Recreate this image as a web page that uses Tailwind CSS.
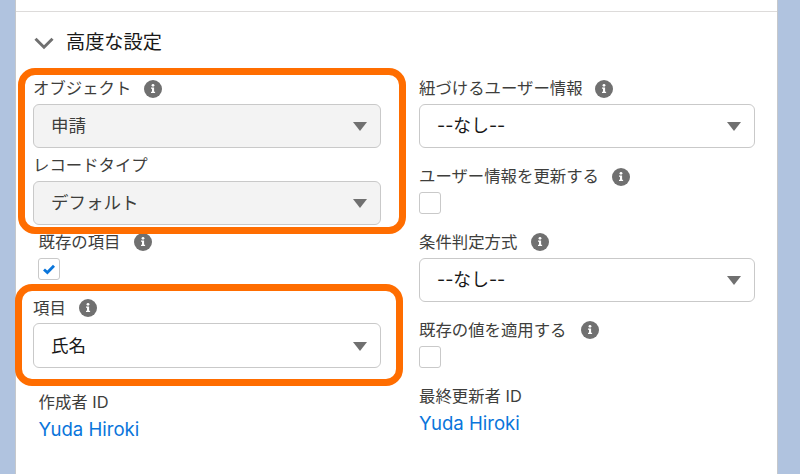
<!DOCTYPE html>
<html lang="ja">
<head>
<meta charset="utf-8">
<title>高度な設定</title>
<script src="https://cdn.jsdelivr.net/npm/@tailwindcss/browser@4"></script>
</head>
<body class="h-[474px] w-[800px] overflow-hidden bg-[#b0c3df] font-['Inter','Noto_Sans_CJK_JP',sans-serif]">
<svg class="hidden">
  <symbol id="info" viewBox="0 0 18 18"><circle cx="9" cy="9" r="9" fill="#707070"/><circle cx="9" cy="5.3" r="1.4" fill="#fff"/><path d="M7 7.5H10.1V11.7h1v1.3H7v-1.3h1V8.8H7z" fill="#fff"/></symbol>
  <symbol id="caret" viewBox="0 0 14 9"><path d="M0 0H14L7 9Z" fill="#707070"/></symbol>
</svg>
<div class="relative ml-[15px] h-full w-[763px] border-x border-[#c6c8cb] bg-white">
  <div class="h-3 border-b border-[#dddbda]"></div>
  <h2 class="flex h-[60px] items-center pl-[18px] text-[19.2px] text-[#181818]">
    <svg class="mt-[3px] mr-3 h-[13px] w-5" viewBox="0 0 20 13" fill="none" stroke="#707070" stroke-width="3"><path d="M1.5 1.8L10 10.2L18.5 1.8"/></svg>高度な設定
  </h2>
  <div class="flex pt-1 pl-[17px] text-[16.4px] text-[#3e3e3c]">
    <div class="w-[386px]">
      <div class="flex h-6 items-center gap-[13px]"><span>オブジェクト</span><svg class="mt-px size-[18px]"><use href="#info"/></svg></div>
      <div class="mt-1 flex h-11 w-[348px] items-center justify-between rounded-md border border-[#c9c9c9] bg-[#f3f3f3] pr-[13px] pl-[17px] text-[17.5px]"><span>申請</span><svg class="mt-px h-[9px] w-[14px]"><use href="#caret"/></svg></div>
      <div class="mt-[5px] flex h-6 items-center"><span>レコードタイプ</span></div>
      <div class="mt-1 flex h-11 w-[348px] items-center justify-between rounded-md border border-[#c9c9c9] bg-[#f3f3f3] pr-[13px] pl-[17px] text-[17.5px]"><span>デフォルト</span><svg class="mt-px h-[9px] w-[14px]"><use href="#caret"/></svg></div>
      <div class="mt-[5px] ml-[5.5px] flex h-6 items-center gap-[13.5px]"><span>既存の項目</span><svg class="size-[18px]"><use href="#info"/></svg></div>
      <div class="mt-1 ml-[5px] flex size-[22px] items-center justify-center rounded-[3px] border border-[#c9c9c9]"><svg class="mt-px h-[11px] w-3" viewBox="0 0 12 11" fill="none" stroke="#0a75db" stroke-width="2.8"><path d="M1 5.4L4.4 8.6L11 1.8"/></svg></div>
      <div class="mt-4 flex h-6 items-center gap-[13px]"><span>項目</span><svg class="size-[18px]"><use href="#info"/></svg></div>
      <div class="mt-[3px] flex h-[45px] w-[348px] items-center justify-between rounded-md border border-[#c9c9c9] pt-px pr-[13px] pl-[17px] text-[17.5px] text-[#181818]"><span>氏名</span><svg class="mt-px h-[9px] w-[14px]"><use href="#caret"/></svg></div>
      <div class="mt-[22px] ml-[5.5px] flex h-6 items-center"><span>作成者 ID</span></div>
      <a class="mt-1 ml-[5.5px] flex h-6 items-center text-[18.6px] text-[#0a75db]">Yuda Hiroki</a>
    </div>
    <div class="w-[336px]">
      <div class="flex h-6 items-center gap-[12px]"><span>紐づけるユーザー情報</span><svg class="mt-px size-[18px]"><use href="#info"/></svg></div>
      <div class="mt-1 flex h-11 items-center justify-between rounded-md border border-[#c9c9c9] pr-[13px] pl-[17px] text-[17.8px] text-[#181818]"><span>--なし--</span><svg class="mt-px h-[9px] w-[14px]"><use href="#caret"/></svg></div>
      <div class="mt-4 flex h-6 items-center gap-[13px]"><span>ユーザー情報を更新する</span><svg class="mt-px size-[18px]"><use href="#info"/></svg></div>
      <div class="mt-1 size-[22px] rounded-[3px] border border-[#c9c9c9]"></div>
      <div class="mt-4 flex h-6 items-center gap-[14px]"><span>条件判定方式</span><svg class="size-[18px]"><use href="#info"/></svg></div>
      <div class="mt-1 flex h-11 items-center justify-between rounded-md border border-[#c9c9c9] pr-[13px] pl-[17px] text-[17.8px] text-[#181818]"><span>--なし--</span><svg class="mt-px h-[9px] w-[14px]"><use href="#caret"/></svg></div>
      <div class="mt-4 flex h-6 items-center gap-[14px]"><span>既存の値を適用する</span><svg class="size-[18px]"><use href="#info"/></svg></div>
      <div class="mt-1 size-[22px] rounded-[3px] border border-[#c9c9c9]"></div>
      <div class="mt-[16px] flex h-6 items-center"><span>最終更新者 ID</span></div>
      <a class="mt-1 flex h-6 items-center text-[18.6px] text-[#0a75db]">Yuda Hiroki</a>
    </div>
  </div>
  <div class="absolute top-[68px] left-[1.5px] h-[166px] w-[388.5px] rounded-[17px] border-[7px] border-[#ff6d00]"></div>
  <div class="absolute top-[284px] -left-px h-[102px] w-[388px] rounded-[17px] border-[7px] border-[#ff6d00]"></div>
</div>
</body>
</html>
